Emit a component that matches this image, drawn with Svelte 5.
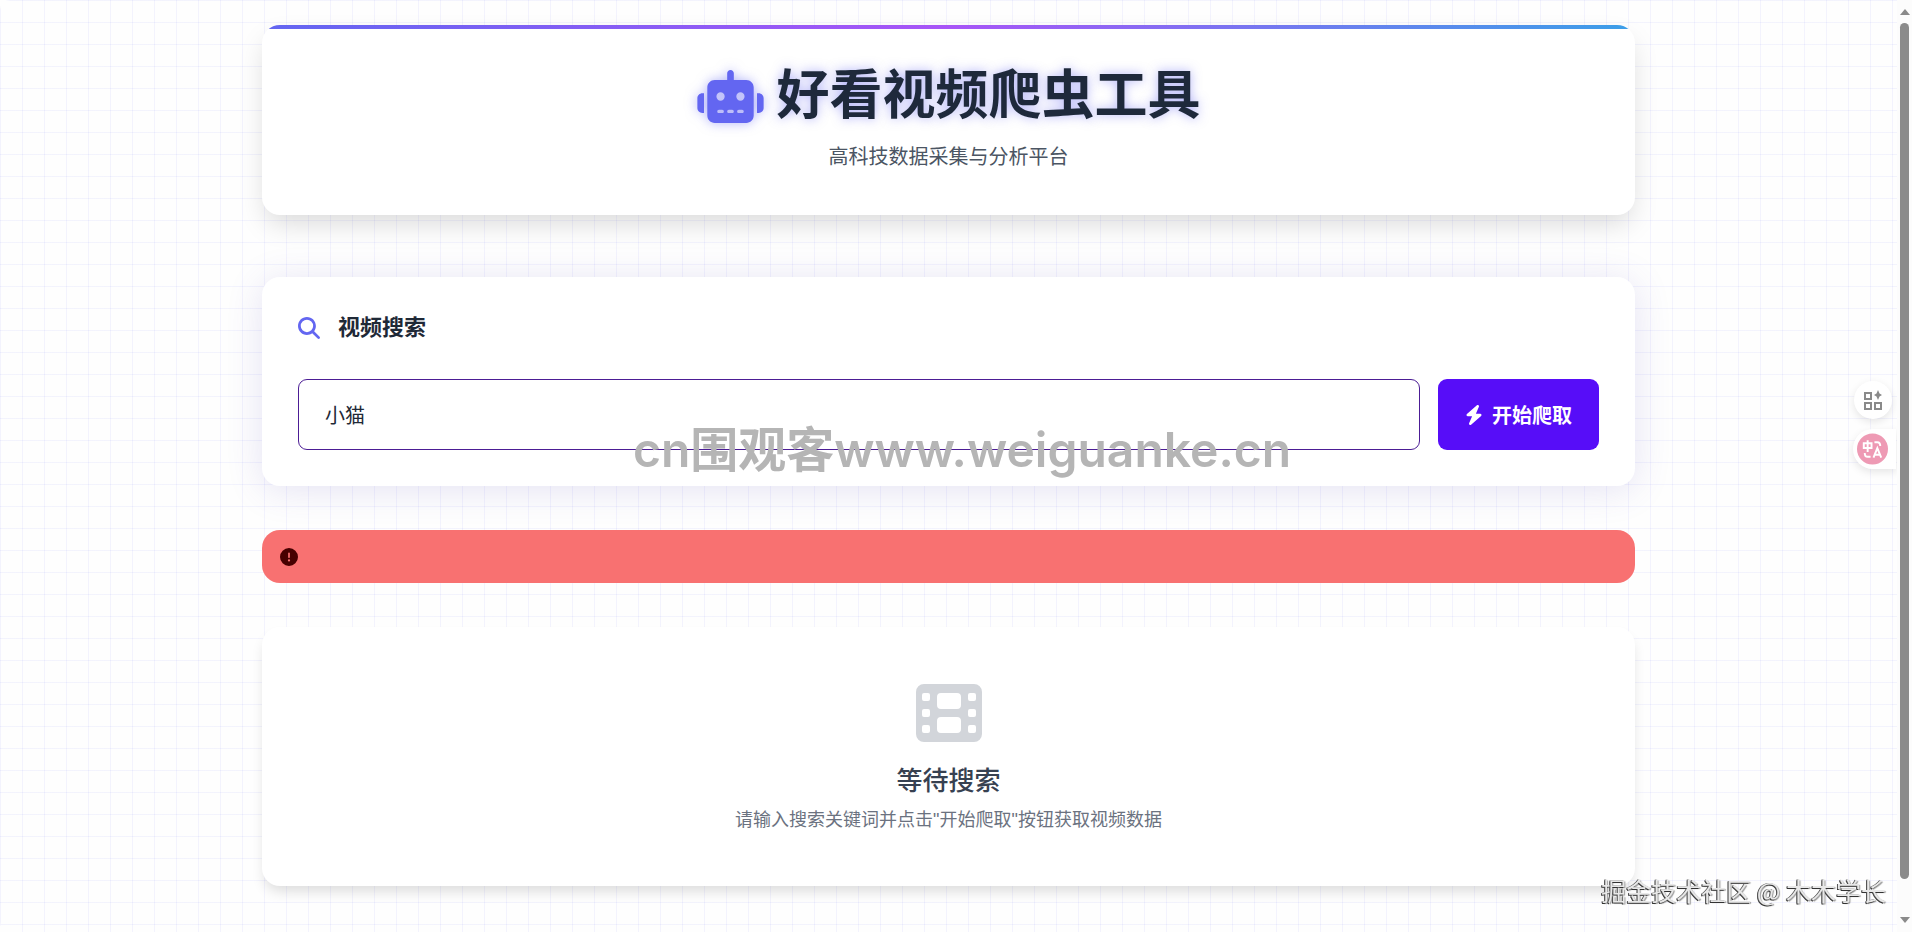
<script lang="ts">
  let keyword = $state("小猫");
  let error = $state("");
</script>

<div class="page">
  <main class="container">
    <header class="card header">
      <h1>
        <svg class="robot" viewBox="0 0 640 512" aria-hidden="true">
          <path
            fill-rule="evenodd"
            d="M320 0c17.700 0 32 14.300 32 32v64h120c39.800 0 72 32.200 72 72v272c0 39.800-32.200 72-72 72H168c-39.800 0-72-32.200-72-72V168c0-39.800 32.200-72 72-72h120V32c0-17.700 14.300-32 32-32zM208 384c-8.800 0-16 7.200-16 16s7.200 16 16 16h32c8.800 0 16-7.200 16-16s-7.200-16-16-16h-32zm96 0c-8.800 0-16 7.200-16 16s7.200 16 16 16h32c8.800 0 16-7.200 16-16s-7.200-16-16-16h-32zm96 0c-8.800 0-16 7.200-16 16s7.200 16 16 16h32c8.800 0 16-7.200 16-16s-7.200-16-16-16h-32zM264 256a40 40 0 1 0-80 0 40 40 0 1 0 80 0zm152 40a40 40 0 1 0 0-80 40 40 0 1 0 0 80zM48 224h16v192H48c-26.500 0-48-21.500-48-48v-96c0-26.500 21.500-48 48-48zm544 0c26.500 0 48 21.500 48 48v96c0 26.500-21.500 48-48 48h-16V224h16z"
          />
        </svg>
        <span>好看视频爬虫工具</span>
      </h1>
      <p>高科技数据采集与分析平台</p>
    </header>

    <section class="card search">
      <h2>
        <svg viewBox="0 0 512 512" aria-hidden="true">
          <path
            d="M416 208c0 45.900-14.900 88.300-40 122.700l126.600 126.700c12.500 12.500 12.500 32.800 0 45.300s-32.800 12.500-45.300 0L330.700 376c-34.400 25.200-76.800 40-122.700 40C93.100 416 0 322.900 0 208S93.100 0 208 0s208 93.100 208 208zM208 352a144 144 0 1 0 0-288 144 144 0 1 0 0 288z"
          />
        </svg>
        <label for="keyword">视频搜索</label>
      </h2>
      <form onsubmit={(e) => e.preventDefault()}>
        <input id="keyword" type="text" bind:value={keyword} />
        <button type="submit">
          <svg viewBox="0 0 448 512" aria-hidden="true">
            <path
              d="M349.400 44.600c5.900-13.700 1.500-29.700-10.600-38.500s-28.600-8-39.900 1.800l-256 224c-10 8.800-13.600 22.900-8.900 35.300S50.700 288 64 288h111.500L98.600 467.400c-5.900 13.700-1.500 29.700 10.600 38.500s28.600 8 39.900-1.800l256-224c10-8.800 13.600-22.900 8.900-35.300s-16.600-20.700-30-20.700H272.500l76.900-179.500z"
            />
          </svg>
          开始爬取
        </button>
      </form>
    </section>

    <div class="alert" role="alert">
      <svg viewBox="0 0 512 512" aria-hidden="true">
        <path
          d="M256 512a256 256 0 1 0 0-512 256 256 0 1 0 0 512zm0-384c13.300 0 24 10.700 24 24v112c0 13.300-10.700 24-24 24s-24-10.700-24-24V152c0-13.300 10.700-24 24-24zm-32 224a32 32 0 1 1 64 0 32 32 0 1 1-64 0z"
        />
      </svg>
      <span>{error}</span>
    </div>

    <section class="card empty">
      <svg viewBox="0 0 66 58" aria-hidden="true">
        <path
          fill-rule="evenodd"
          d="M8 0h50a8 8 0 0 1 8 8v42a8 8 0 0 1-8 8H8a8 8 0 0 1-8-8V8a8 8 0 0 1 8-8zM8 9a2 2 0 0 0-2 2v4a2 2 0 0 0 2 2h4a2 2 0 0 0 2-2v-4a2 2 0 0 0-2-2zm0 16a2 2 0 0 0-2 2v4a2 2 0 0 0 2 2h4a2 2 0 0 0 2-2v-4a2 2 0 0 0-2-2zm0 16a2 2 0 0 0-2 2v4a2 2 0 0 0 2 2h4a2 2 0 0 0 2-2v-4a2 2 0 0 0-2-2zM54 9a2 2 0 0 0-2 2v4a2 2 0 0 0 2 2h4a2 2 0 0 0 2-2v-4a2 2 0 0 0-2-2zm0 16a2 2 0 0 0-2 2v4a2 2 0 0 0 2 2h4a2 2 0 0 0 2-2v-4a2 2 0 0 0-2-2zm0 16a2 2 0 0 0-2 2v4a2 2 0 0 0 2 2h4a2 2 0 0 0 2-2v-4a2 2 0 0 0-2-2zM25 9a4 4 0 0 0-4 4v8a4 4 0 0 0 4 4h16a4 4 0 0 0 4-4v-8a4 4 0 0 0-4-4zm0 24a4 4 0 0 0-4 4v8a4 4 0 0 0 4 4h16a4 4 0 0 0 4-4v-8a4 4 0 0 0-4-4z"
        />
      </svg>
      <h3>等待搜索</h3>
      <p>请输入搜索关键词并点击"开始爬取"按钮获取视频数据</p>
    </section>
  </main>

  <div class="site-mark">cn围观客www.weiguanke.cn</div>
  <div class="author-mark">掘金技术社区 @ 木木学长</div>

  <aside class="tools">
    <button class="apps" aria-label="apps">
      <svg viewBox="0 0 18 20" aria-hidden="true">
        <g fill="none" stroke="#8a8a8a" stroke-width="2">
          <path d="M1 3h6v6H1zM1 13h6v6H1zM11 13h6v6h-6z" />
        </g>
        <path fill="#8a8a8a" d="M14 0l1.500 3.500L18 5l-2.500 1.500L14 10l-1.500-3.500L10 5l2.500-1.500z" />
      </svg>
    </button>
    <button class="translate" aria-label="translate">
      <svg viewBox="0 0 32 32" aria-hidden="true">
        <circle cx="16" cy="16" r="16" fill="#ee9ab4" />
        <g fill="none" stroke="#fff" stroke-width="2">
          <path d="M7 10h8v5H7zM11 7v12M18 9h3q3 0 3 4M8 20q0 4 3 4h3" />
          <path d="M17 25l4-10 4 10M18 22h6" />
        </g>
      </svg>
    </button>
  </aside>

  <div class="scrollbar" aria-hidden="true">
    <svg viewBox="0 0 10 6"><path d="M5 0l5 6H0z" /></svg>
    <div class="thumb"></div>
    <svg viewBox="0 0 10 6"><path d="M0 0h10L5 6z" /></svg>
  </div>
</div>

<style>
  :global(body) {
    background: #fefefe;
    font-family: "Liberation Sans", "Noto Sans CJK SC", sans-serif;
    color: #1f2937;
  }
  .page {
    box-sizing: border-box;
    min-height: 100vh;
    padding: 25px 15px 44px 0;
    overflow: hidden;
    border-radius: 10px;
    background-image:
      linear-gradient(rgba(99, 102, 241, 0.07) 1px, transparent 1px),
      linear-gradient(90deg, rgba(99, 102, 241, 0.07) 1px, transparent 1px);
    background-size: 22px 22px;
  }
  .container {
    display: flex;
    flex-direction: column;
    max-width: 1373px;
    margin: 0 auto;
  }
  h1,
  h2,
  h3,
  p {
    margin: 0;
  }
  svg {
    display: block;
    flex: none;
    fill: currentColor;
  }
  .card {
    border-radius: 18px;
    background: #fff;
  }

  .header {
    position: relative;
    display: flex;
    flex-direction: column;
    align-items: center;
    margin-bottom: 62px;
    padding: 39px 36px 43px;
    overflow: hidden;
    box-shadow: 0 12px 28px -4px rgba(0, 0, 0, 0.15);
  }
  .header::before {
    position: absolute;
    top: 0;
    left: 0;
    right: 0;
    height: 4px;
    content: "";
    background: linear-gradient(90deg, #6366f1, #a855f7, #3b9fe8);
  }
  h1 {
    display: flex;
    align-items: center;
    gap: 13px;
    color: #1e293b;
    font-size: 53px;
    line-height: 64px;
    text-shadow: 0 0 11px rgba(99, 102, 241, 0.5);
  }
  .robot {
    width: 67px;
    height: 53px;
    color: #6366f1;
    filter: drop-shadow(0 0 6px rgba(99, 102, 241, 0.5));
  }
  .header p {
    margin-top: 14px;
    color: #4b5563;
    font-size: 20px;
    line-height: 30px;
  }

  .search {
    margin-bottom: 44px;
    padding: 36px;
    box-shadow: 0 4px 36px rgba(79, 70, 180, 0.15);
  }
  h2 {
    display: flex;
    align-items: center;
    gap: 18px;
    margin-bottom: 36px;
    font-size: 22px;
    line-height: 30px;
  }
  h2 svg {
    width: 22px;
    height: 22px;
    color: #6366f1;
  }
  form {
    display: flex;
    gap: 18px;
  }
  input {
    box-sizing: border-box;
    flex: 1;
    min-width: 0;
    height: 71px;
    padding: 0 26px;
    border: 1px solid #4c1d95;
    border-radius: 9px;
    background: #fff;
    color: #1f2937;
    font: inherit;
    font-size: 20px;
    outline: none;
  }
  button {
    border: 0;
    font: inherit;
    cursor: pointer;
  }
  form button {
    display: flex;
    align-items: center;
    gap: 9px;
    padding: 0 27px;
    border-radius: 9px;
    background: #570df8;
    color: #fff;
    font-size: 20px;
    font-weight: 700;
  }
  form button svg {
    width: 18px;
    height: 20px;
  }

  .alert {
    display: flex;
    align-items: center;
    gap: 18px;
    min-height: 53px;
    margin-bottom: 44px;
    padding: 0 18px;
    border-radius: 18px;
    background: #f87171;
    color: #470000;
  }
  .alert svg {
    width: 18px;
    height: 18px;
  }

  .empty {
    display: flex;
    flex-direction: column;
    align-items: center;
    padding: 57px 36px 52px;
    box-shadow: 0 8px 14px -3px rgba(0, 0, 0, 0.14);
  }
  .empty svg {
    width: 66px;
    height: 58px;
    color: #d2d5da;
  }
  h3 {
    margin-top: 20px;
    color: #374151;
    font-size: 26px;
    font-weight: 500;
    line-height: 38px;
  }
  .empty p {
    margin-top: 6px;
    color: #6b7280;
    font-size: 18px;
    line-height: 28px;
  }

  /* overlays */
  .site-mark {
    position: fixed;
    top: 420px;
    left: 0;
    right: 0;
    padding-left: 12px;
    color: #b5b5b5;
    font-family: Inter, "Noto Sans CJK SC", sans-serif;
    font-size: 48px;
    font-weight: 600;
    line-height: 60px;
    text-align: center;
    pointer-events: none;
  }
  .author-mark {
    position: fixed;
    right: 26px;
    bottom: 24px;
    color: #e8e8e8;
    font-family: "Noto Sans CJK SC", sans-serif;
    font-size: 25px;
    line-height: 36px;
    text-shadow:
      -1px 0 0 #555,
      -1px 1px 0 #333,
      1px 1px 1px #999;
    pointer-events: none;
  }
  .tools {
    position: fixed;
    top: 381px;
    right: 16px;
    display: flex;
    flex-direction: column;
    align-items: flex-end;
    gap: 10px;
  }
  .tools button {
    display: flex;
    align-items: center;
    justify-content: center;
    background: #fff;
    box-shadow: 0 3px 8px rgba(0, 0, 0, 0.1);
  }
  .apps {
    width: 38px;
    height: 38px;
    margin-right: 4px;
    padding: 0;
    border-radius: 50%;
  }
  .apps svg {
    width: 18px;
    height: 20px;
  }
  .translate {
    padding: 4px 8px 4px 4px;
    border-radius: 20px 0 0 20px;
  }
  .translate svg {
    width: 31px;
    height: 32px;
  }
  .scrollbar {
    position: fixed;
    top: 0;
    right: 0;
    bottom: 0;
    box-sizing: border-box;
    display: flex;
    flex-direction: column;
    align-items: center;
    width: 15px;
    padding: 9px 0;
    background: #fcfcfc;
    color: #8a8a8a;
  }
  .scrollbar svg {
    width: 10px;
    height: 6px;
  }
  .thumb {
    flex: 1;
    width: 9px;
    margin: 8px 0 38px;
    border-radius: 5px;
    background: #8b8b8b;
  }
</style>
